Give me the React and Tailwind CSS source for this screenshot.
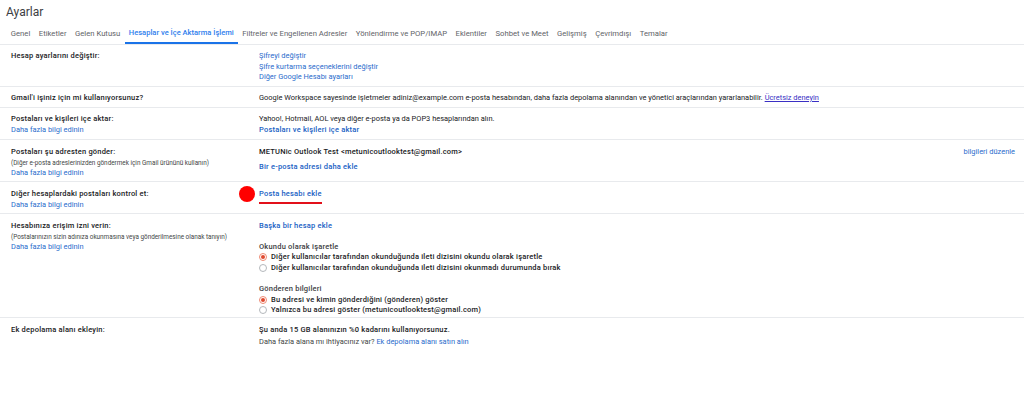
const tabs = [
  'Genel',
  'Etiketler',
  'Gelen Kutusu',
  'Hesaplar ve İçe Aktarma İşlemi',
  'Filtreler ve Engellenen Adresler',
  'Yönlendirme ve POP/IMAP',
  'Eklentiler',
  'Sohbet ve Meet',
  'Gelişmiş',
  'Çevrimdışı',
  'Temalar',
];

// the bold labels run wider than the regular text
const strong = 'font-medium text-[7.5px] tracking-[0.2px]';

function More() {
  return <div className="text-[#2a6ccc]">Daha fazla bilgi edinin</div>;
}

function Row({ label, note, more, size, children }) {
  return (
    <div className={`flex border-b border-[#e8eaed] pl-[11px] pr-[9px] ${size}`}>
      <div className="w-[248px] shrink-0">
        <div className={`${strong} text-[#202124]`}>{label}</div>
        {note && <div className="text-[6.36px] leading-[10px] text-[#444746]">{note}</div>}
        {more && <More />}
      </div>
      <div className="min-w-0 flex-1">{children}</div>
    </div>
  );
}

function Radio({ checked, children }) {
  return (
    <div className={`flex items-center gap-[4px] ${strong} text-[#202124]`}>
      <span
        className={`flex h-[8px] w-[8px] items-center justify-center rounded-full border ${
          checked ? 'border-[#ee8a74]' : 'border-[#b4b8bc]'
        }`}
      >
        {checked && <span className="h-[4px] w-[4px] rounded-full bg-[#e0492f]" />}
      </span>
      {children}
    </div>
  );
}

export default function App() {
  return (
    <div className="h-[416px] w-[1024px] overflow-hidden bg-white font-['Roboto',sans-serif] text-[7.45px] leading-[10.5px] text-[#202124]">
      <h1 className="pl-[6px] pt-[3px] text-[12px] leading-[18px] text-[#3c4043]">Ayarlar</h1>

      {/* Tabs */}
      <div className="mt-[5px] flex h-[19px] items-stretch border-b border-[#e8eaed] pl-[6.5px] text-[7.7px] text-[#5f6368]">
        {tabs.map((tab, i) => (
          <div
            key={tab}
            className={`flex items-center px-[4.25px] pb-[2px] ${
              i === 3 ? 'border-b-2 border-[#1a73e8] text-[7.55px] font-medium text-[#2f80ed]' : ''
            }`}
          >
            {tab}
          </div>
        ))}
      </div>

      <Row label="Hesap ayarlarını değiştir:" size="h-[42px] pt-[6px]">
        <div className="text-[#2a6ccc]">
          <div>Şifreyi değiştir</div>
          <div>Şifre kurtarma seçeneklerini değiştir</div>
          <div>Diğer Google Hesabı ayarları</div>
        </div>
      </Row>

      <Row label="Gmail'i işiniz için mi kullanıyorsunuz?" size="h-[21px] pt-[6px]">
        Google Workspace sayesinde işletmeler adiniz@example.com e-posta hesabından, daha fazla depolama alanından ve yönetici araçlarından yararlanabilir.{' '}
        <span className="text-[#3a2fc4] underline">Ücretsiz deneyin</span>
      </Row>

      <Row label="Postaları ve kişileri içe aktar:" more size="h-[32px] pt-[6px]">
        <div>Yahoo!, Hotmail, AOL veya diğer e-posta ya da POP3 hesaplarından alın.</div>
        <div className={`${strong} text-[#1a5fc4]`}>Postaları ve kişileri içe aktar</div>
      </Row>

      <Row
        label="Postaları şu adresten gönder:"
        note="(Diğer e-posta adreslerinizden göndermek için Gmail ürününü kullanın)"
        more
        size="h-[42px] pt-[7px]"
      >
        <div className="flex justify-between">
          <span className={strong}>METUNic Outlook Test &lt;metunicoutlooktest@gmail.com&gt;</span>
          <span className="text-[#2a6ccc]">bilgileri düzenle</span>
        </div>
        <div className={`mt-[4px] ${strong} text-[#1a5fc4]`}>Bir e-posta adresi daha ekle</div>
      </Row>

      <Row label="Diğer hesaplardaki postaları kontrol et:" more size="h-[32px] pt-[7px]">
        <div className={`relative w-fit ${strong} text-[#1a5fc4]`}>
          Posta hesabı ekle
          <span className="absolute left-[-20px] top-[-3px] h-[16px] w-[16px] rounded-full bg-[#ff0000]" />
          <span className="absolute left-0 right-0 top-[13px] h-[2px] bg-[#e2101a]" />
        </div>
      </Row>

      <Row
        label="Hesabınıza erişim izni verin:"
        note="(Postalarınızın sizin adınıza okunmasına veya gönderilmesine olanak tanıyın)"
        more
        size="h-[104px] pt-[7px]"
      >
        <div className={`${strong} text-[#1a5fc4]`}>Başka bir hesap ekle</div>
        <div className={`mt-[10px] ${strong} text-[#3c4043]`}>Okundu olarak işaretle</div>
        <Radio checked>Diğer kullanıcılar tarafından okunduğunda ileti dizisini okundu olarak işaretle</Radio>
        <Radio>Diğer kullanıcılar tarafından okunduğunda ileti dizisini okunmadı durumunda bırak</Radio>
        <div className={`mt-[11px] ${strong} text-[#3c4043]`}>Gönderen bilgileri</div>
        <Radio checked>Bu adresi ve kimin gönderdiğini (gönderen) göster</Radio>
        <Radio>Yalnızca bu adresi göster (metunicoutlooktest@gmail.com)</Radio>
      </Row>

      <div className="flex pl-[11px] pt-[7px]">
        <div className={`w-[248px] shrink-0 ${strong}`}>Ek depolama alanı ekleyin:</div>
        <div>
          <div className={strong}>Şu anda 15 GB alanınızın %0 kadarını kullanıyorsunuz.</div>
          <div className="mt-[1px] text-[#444746]">
            Daha fazla alana mı ihtiyacınız var? <span className="text-[#2a6ccc]">Ek depolama alanı satın alın</span>
          </div>
        </div>
      </div>
    </div>
  );
}
